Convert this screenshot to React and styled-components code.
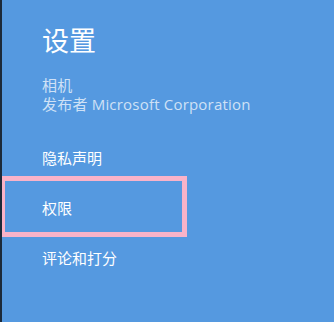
import React from 'react';
import styled, { createGlobalStyle } from 'styled-components';

const GlobalStyle = createGlobalStyle`
  html, body {
    margin: 0;
    padding: 0;
    background: #5599e0;
  }
  #root {
    width: 334px;
    height: 322px;
  }
`

const Pane = styled.div`
  position: relative;
  box-sizing: border-box;
  width: 334px;
  height: 322px;
  background: #5599e0;
  border-left: 2px solid #1c2a3a;
  padding: 22px 0 0 40px;
  font-family: "Segoe UI", "Open Sans", "Noto Sans CJK SC", sans-serif;
  color: #ffffff;
  overflow: hidden;
`

const Title = styled.h1`
  margin: 0;
  font-size: 27px;
  line-height: 36px;
  font-weight: 400;
  font-family: "Noto Sans CJK SC", sans-serif;
`

const Info = styled.div`
  margin-top: 18px;
  display: flex;
  flex-direction: column;
  color: #cfe1f6;
  font-size: 15px;
  line-height: 19px;
  letter-spacing: 0.2px;
`

const Menu = styled.ul`
  list-style: none;
  margin: 18px 0 0 -40px;
  padding: 0;
`

const Item = styled.li`
  position: relative;
  height: 50px;
  display: flex;
  align-items: center;
  padding-left: 40px;
  font-size: 15px;
  font-family: "Noto Sans CJK SC", sans-serif;
  color: #ffffff;
`

const Highlight = styled.span`
  position: absolute;
  top: -6px;
  bottom: -5px;
  left: -2px;
  width: 187px;
  box-sizing: border-box;
  border: 5px solid #f9b3c9;
  pointer-events: none;
`

const items = ['隐私声明', '权限', '评论和打分'];

function App() {
  return (
    <>
      <GlobalStyle />
      <Pane>
        <Title>设置</Title>
        <Info>
          <span>相机</span>
          <span>发布者 Microsoft Corporation</span>
        </Info>
        <Menu>
          {items.map((label) => (
            <Item key={label}>
              {label}
              {label === '权限' && <Highlight />}
            </Item>
          ))}
        </Menu>
      </Pane>
    </>
  )
}

export default App;
